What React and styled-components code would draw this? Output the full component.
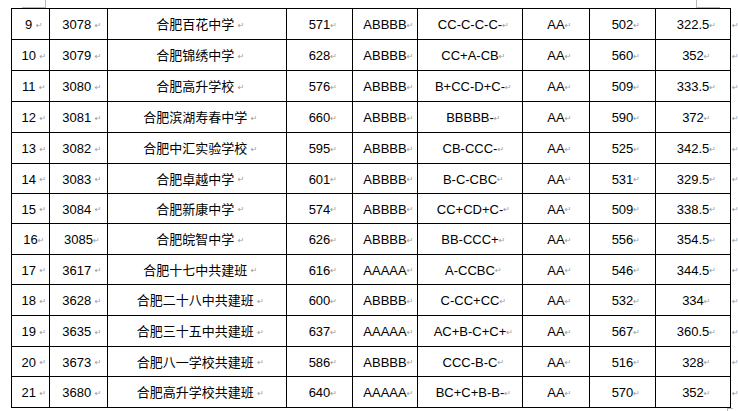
import React from "react";
import styled, { createGlobalStyle } from "styled-components";

const GlobalStyle = createGlobalStyle`
  html, body { margin: 0; padding: 0; background: #fff; }
  body { font-family: "Liberation Sans", "Noto Sans CJK SC", sans-serif; }
`;

const COLS = [38, 58, 179, 66, 65, 105, 67, 66, 75];
const ROWS = [31, 31, 31, 31, 31, 30, 30, 31, 30, 31, 31, 30, 31];

const rows = [
  ["9", "3078", "合肥百花中学", "571", "ABBBB", "CC-C-C-C-", "AA", "502", "322.5"],
  ["10", "3079", "合肥锦绣中学", "628", "ABBBB", "CC+A-CB", "AA", "560", "352"],
  ["11", "3080", "合肥高升学校", "576", "ABBBB", "B+CC-D+C-", "AA", "509", "333.5"],
  ["12", "3081", "合肥滨湖寿春中学", "660", "ABBBB", "BBBBB-", "AA", "590", "372"],
  ["13", "3082", "合肥中汇实验学校", "595", "ABBBB", "CB-CCC-", "AA", "525", "342.5"],
  ["14", "3083", "合肥卓越中学", "601", "ABBBB", "B-C-CBC", "AA", "531", "329.5"],
  ["15", "3084", "合肥新康中学", "574", "ABBBB", "CC+CD+C-", "AA", "509", "338.5"],
  ["16", "3085", "合肥皖智中学", "626", "ABBBB", "BB-CCC+", "AA", "556", "354.5"],
  ["17", "3617", "合肥十七中共建班", "616", "AAAAA", "A-CCBC", "AA", "546", "344.5"],
  ["18", "3628", "合肥二十八中共建班", "600", "ABBBB", "C-CC+CC", "AA", "532", "334"],
  ["19", "3635", "合肥三十五中共建班", "637", "AAAAA", "AC+B-C+C+", "AA", "567", "360.5"],
  ["20", "3673", "合肥八一学校共建班", "586", "ABBBB", "CCC-B-C", "AA", "516", "328"],
  ["21", "3680", "合肥高升学校共建班", "640", "AAAAA", "BC+C+B-B-", "AA", "570", "352"],
];

const Page = styled.div`
  position: relative;
  width: 738px;
  height: 411px;
  overflow: hidden;
  box-sizing: border-box;
  padding: 8px 0 0 11px;
  display: flex;
  align-items: flex-start;
  background: #fff;
`;

const Table = styled.div`
  display: grid;
  grid-template-columns: ${(p) => p.$cols};
  grid-template-rows: ${(p) => p.$rows};
  border-left: 1px solid #000;
  border-top: 1px solid #000;
`;

const Cell = styled.div`
  box-sizing: border-box;
  border-right: 1px solid #000;
  border-bottom: 1px solid #000;
  display: flex;
  align-items: center;
  justify-content: center;
  font-size: 13px;
  color: #000;
  white-space: pre;
  line-height: 1;
  padding-top: 1px;
`;

const Mark = styled.span`
  display: inline-block;
  width: 7px;
  margin-right: -7px;
  font-family: "DejaVu Sans", sans-serif;
  font-size: 8px;
  color: #9a9a9a;
  line-height: 1;
  position: relative;
  top: 1px;
`;

const RowMarks = styled.div`
  display: grid;
  grid-template-rows: ${(p) => p.$rows};
  margin-top: 1px;
  padding-left: 1px;
`;

const RowMark = styled.div`
  display: flex;
  align-items: center;
  font-family: "DejaVu Sans", sans-serif;
  font-size: 8px;
  color: #9a9a9a;
  padding-top: 1px;
`;

const Corner = styled.div`
  position: absolute;
  box-sizing: border-box;
  border-color: #b8b8b8;
  border-style: solid;
  border-width: 0;
`;

const TopLeftCorner = styled(Corner)`
  left: 22px;
  top: 0;
  width: 24px;
  height: 8px;
  border-right-width: 1px;
  border-bottom-width: 1px;
`;

const TopRightCorner = styled(Corner)`
  left: 696px;
  top: 0;
  width: 24px;
  height: 8px;
  border-left-width: 1px;
  border-bottom-width: 1px;
`;

const BottomRightCorner = styled(Corner)`
  left: 727px;
  top: 408px;
  width: 6px;
  height: 6px;
  border-left-width: 1px;
  border-top-width: 1px;
`;

const spaced = (ri, ci) => ci < 3 && !(ri === 7 && ci < 2);

export default function App() {
  const cols = COLS.map((c) => `${c}px`).join(" ");
  const rws = ROWS.map((r) => `${r}px`).join(" ");
  return (
    <>
      <GlobalStyle />
      <Page>
        <TopLeftCorner />
        <TopRightCorner />
        <BottomRightCorner />
        <Table $cols={cols} $rows={rws}>
          {rows.map((row, ri) =>
            row.map((v, ci) => (
              <Cell key={`${ri}-${ci}`}>
                {v}
                {spaced(ri, ci) ? " " : ""}
                <Mark>↵</Mark>
              </Cell>
            ))
          )}
        </Table>
        <RowMarks $rows={rws}>
          {rows.map((_, i) => (
            <RowMark key={i}>↵</RowMark>
          ))}
        </RowMarks>
      </Page>
    </>
  );
}
